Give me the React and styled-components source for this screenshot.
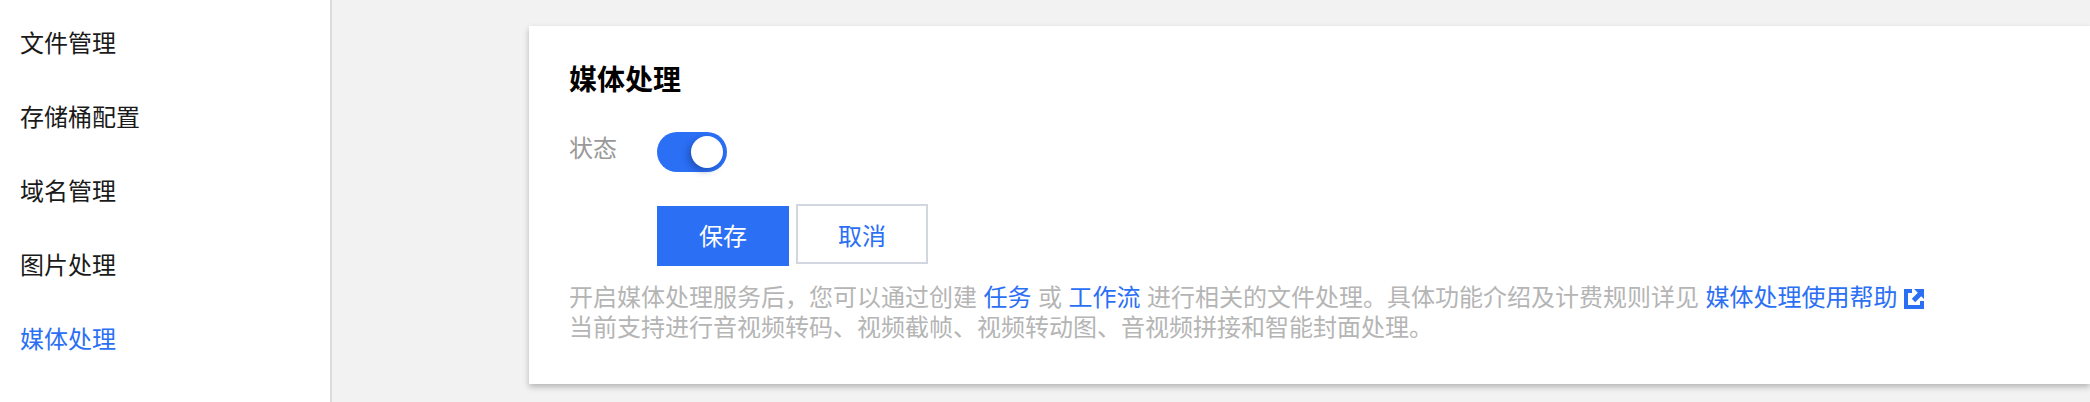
import React from 'react'
import styled, { createGlobalStyle } from 'styled-components'

const GlobalStyle = createGlobalStyle`
html, body {
  margin: 0;
  padding: 0;
  background: #f2f2f2;
}
body {
  font-family: "Liberation Sans", "Noto Sans CJK SC", sans-serif;
}
`

const Page = styled.div`
display: flex;
width: 2090px;
height: 402px;
overflow: hidden;
`

const Sidebar = styled.nav`
width: 330px;
flex-shrink: 0;
background: #fff;
border-right: 2px solid #dcdcdc;
padding-top: 7px;
`

const MenuItem = styled.div`
height: 74px;
line-height: 74px;
padding-left: 20px;
font-size: 24px;
color: ${props => (props.$active ? '#2b6ff5' : '#1a1a1a')};
`

const Main = styled.main`
flex: 1;
padding: 26px 0 0 197px;
min-width: 0;
`

const Card = styled.section`
background: #fff;
height: 358px;
padding: 35px 40px 0;
box-sizing: border-box;
box-shadow: 0 3px 6px rgba(0, 0, 0, 0.25);
`

const Title = styled.h2`
margin: 0 0 32px;
font-size: 28px;
line-height: 39px;
font-weight: 700;
color: #000;
`

const Row = styled.div`
display: flex;
align-items: center;
height: 40px;
`

const Label = styled.span`
width: 88px;
font-size: 24px;
line-height: 34px;
margin-bottom: 6px;
color: #999;
`

const Switch = styled.span`
display: flex;
align-items: center;
justify-content: flex-end;
width: 70px;
height: 40px;
padding-right: 4px;
box-sizing: border-box;
border-radius: 20px;
background: #2b6ff5;
`

const Knob = styled.span`
width: 32px;
height: 32px;
border-radius: 50%;
background: #fff;
box-shadow: -3px 3px 6px rgba(20, 50, 120, 0.45);
`

const Actions = styled.div`
display: flex;
align-items: flex-start;
gap: 7px;
margin: 32px 0 0 88px;
`

const Button = styled.button`
width: 132px;
height: 60px;
margin: ${props => (props.$primary ? '2px 0 0' : '0')};
padding: ${props => (props.$primary ? '0 0 3px' : '0')};
font: inherit;
font-size: 24px;
box-sizing: border-box;
border: 2px solid ${props => (props.$primary ? '#2b6ff5' : '#d2d6e0')};
background: ${props => (props.$primary ? '#2b6ff5' : '#fff')};
color: ${props => (props.$primary ? '#fff' : '#2b6ff5')};
`

const Hint = styled.p`
margin: 17px 0 0;
font-size: 24px;
line-height: 30px;
color: #b5b5b5;
white-space: nowrap;
`

const HelpLink = styled.a`
color: #2b6ff5;
margin: 0 6.5px;
`

const ExternalIcon = styled.svg`
width: 20px;
height: 20px;
vertical-align: -3px;
`

function App() {
  const menu = ['文件管理', '存储桶配置', '域名管理', '图片处理', '媒体处理']
  return (
    <Page>
      <GlobalStyle />
      <Sidebar>
        {menu.map((name, i) => (
          <MenuItem key={name} $active={i === 4}>{name}</MenuItem>
        ))}
      </Sidebar>
      <Main>
        <Card>
          <Title>媒体处理</Title>
          <Row>
            <Label>状态</Label>
            <Switch><Knob /></Switch>
          </Row>
          <Actions>
            <Button $primary>保存</Button>
            <Button>取消</Button>
          </Actions>
          <Hint>
            开启媒体处理服务后，您可以通过创建<HelpLink>任务</HelpLink>或<HelpLink>工作流</HelpLink>进行相关的文件处理。具体功能介绍及计费规则详见<HelpLink>媒体处理使用帮助</HelpLink>
            <ExternalIcon viewBox="0 0 20 20">
              <path fill="#2b6ff5" d="M0 0h8v4H4v12h12v-4h4v8H0z" />
              <path fill="#2b6ff5" d="M10 0h10v10l-2.8-2.8-6 6-3.4-3.4 6-6z" />
            </ExternalIcon>
            <br />
            当前支持进行音视频转码、视频截帧、视频转动图、音视频拼接和智能封面处理。
          </Hint>
        </Card>
      </Main>
    </Page>
  )
}

export default App
